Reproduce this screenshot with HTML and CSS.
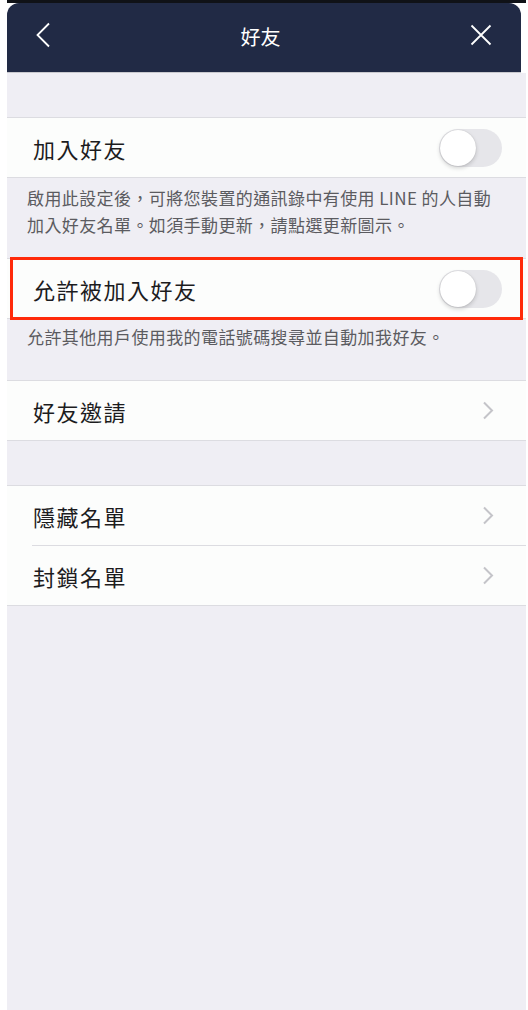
FILE: index.html
```html
<!DOCTYPE html>
<html lang="zh-Hant">

<head>
    <meta charset="utf-8">
    <title>好友</title>
    <link rel="stylesheet" href="styles.css">
</head>

<body>
    <div class="screen">
        <div class="top">
            <div class="navbar">
                <svg class="nav-icon back" width="16" height="26" viewBox="0 0 16 26">
                    <path d="M14 1.5 L2.5 13 L14 24.5" />
                </svg>
                <div class="title">好友</div>
                <svg class="nav-icon close" width="22" height="22" viewBox="0 0 22 22">
                    <path d="M1.5 1.5 L20.5 20.5 M20.5 1.5 L1.5 20.5" />
                </svg>
            </div>
        </div>

        <div class="spacer"></div>

        <div class="group">
            <div class="row">
                <span>加入好友</span>
                <span class="switch"></span>
            </div>
        </div>
        <p class="note">啟用此設定後，可將您裝置的通訊錄中有使用 LINE 的人自動<br>加入好友名單。如須手動更新，請點選更新圖示。</p>

        <div class="group marked">
            <div class="row">
                <span>允許被加入好友</span>
                <span class="switch"></span>
            </div>
        </div>
        <p class="note single">允許其他用戶使用我的電話號碼搜尋並自動加我好友。</p>

        <div class="group">
            <div class="row">
                <span>好友邀請</span>
                <svg class="chevron" width="12" height="19" viewBox="0 0 12 19">
                    <path d="M2 1.5 L10 9.5 L2 17.5" />
                </svg>
            </div>
        </div>

        <div class="spacer"></div>

        <div class="group">
            <div class="row">
                <span>隱藏名單</span>
                <svg class="chevron" width="12" height="19" viewBox="0 0 12 19">
                    <path d="M2 1.5 L10 9.5 L2 17.5" />
                </svg>
            </div>
            <div class="row">
                <span>封鎖名單</span>
                <svg class="chevron" width="12" height="19" viewBox="0 0 12 19">
                    <path d="M2 1.5 L10 9.5 L2 17.5" />
                </svg>
            </div>
        </div>
    </div>
</body>
</html>
```

FILE: styles.css
```css
html,
body {
    padding: 0;
    margin: 0;
}

* {
    box-sizing: border-box;
}

body {
    background-color: #fff;
    font-family: "Noto Sans CJK TC", "Noto Sans", sans-serif;
    color: #1c1c1e;
}

.screen {
    margin-left: 7px;
    width: 519px;
    height: 1010px;
    background-color: #efeef4;
    overflow: hidden;
}

.top {
    background: linear-gradient(to bottom, #101217 3px, #fff 3px);
    padding: 3px 5px 0 0;
}

.navbar {
    height: 70px;
    background-color: #212a45;
    border-radius: 12px 12px 0 0;
    border-bottom: 1px solid #c9c9ce;
    display: flex;
    align-items: center;
    justify-content: space-between;
    padding: 0 29px 0 28px;
}

.navbar .title {
    color: #fff;
    font-size: 20px;
    margin-top: -3px;
}

.nav-icon {
    fill: none;
    stroke: #fff;
    stroke-width: 1.8;
    margin-top: -6px;
}

.spacer {
    height: 44px;
}

.group {
    background-color: #fcfdfc;
    border-top: 1px solid #dcdce1;
    border-bottom: 1px solid #dcdce1;
}

.group.marked {
    position: relative;
}

.group.marked::after {
    content: "";
    position: absolute;
    top: -2px;
    bottom: -2px;
    left: 3px;
    right: 3px;
    border: 3px solid #ff2a0a;
}

.row {
    height: 59px;
    display: flex;
    align-items: center;
    justify-content: space-between;
    padding: 0 24px 0 26px;
    font-size: 22px;
    letter-spacing: 1.5px;
    position: relative;
}

.row + .row::before {
    content: "";
    position: absolute;
    top: -1px;
    left: 25px;
    right: 0;
    border-top: 1px solid #dcdce1;
}

.row + .row {
    margin-top: 1px;
}

.switch {
    width: 63px;
    height: 38px;
    border-radius: 19px;
    background-color: #e6e6ea;
    position: relative;
}

.switch::after {
    content: "";
    position: absolute;
    top: 1px;
    left: 1px;
    width: 36px;
    height: 36px;
    border-radius: 50%;
    background-color: #fff;
    box-shadow: 0 2px 4px rgba(0, 0, 0, 0.18), 0 0 1px rgba(0, 0, 0, 0.2);
}

.chevron {
    fill: none;
    stroke: #c4c4c9;
    stroke-width: 2;
    margin-right: 8px;
}

.note {
    margin: 0;
    padding: 6px 10px 20px 20px;
    font-size: 17px;
    line-height: 27px;
    letter-spacing: 0.4px;
    color: #5b5b60;
}

.note.single {
    padding: 4px 10px 30px 20px;
}
```
